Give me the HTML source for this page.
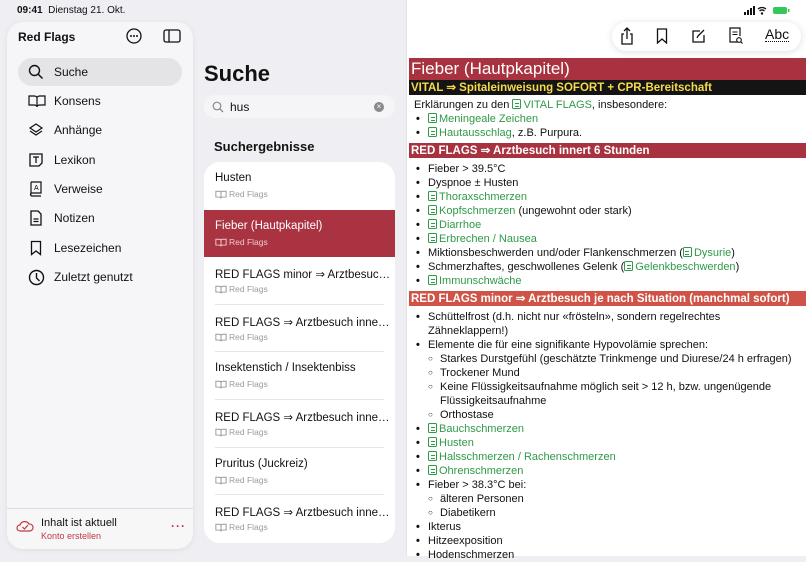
<!DOCTYPE html>
<html><head><meta charset="utf-8"><style>
*{margin:0;padding:0;box-sizing:border-box}
body{width:806px;height:556px;overflow:hidden;background:#efeff3;font-family:"Liberation Sans",sans-serif;color:#111;position:relative}
.a{position:absolute;white-space:nowrap}
.side{position:absolute;left:7px;top:22px;width:186px;height:527px;background:#f6f6f8;border-radius:16px;box-shadow:0 1px 6px rgba(0,0,0,.08);overflow:hidden}
.nav{position:absolute;left:0;width:186px;height:28px;font-size:12px;line-height:28px}
.nav svg{position:absolute;left:21px;top:6px}
.nav span{position:absolute;left:47px}
.list{position:absolute;left:204px;top:162px;width:191px;height:381px;background:#fff;border-radius:16px;overflow:hidden}
.row{position:absolute;left:0;width:191px;height:47.6px}
.row .t{position:absolute;left:11px;top:10px;font-size:11.5px;white-space:nowrap;width:176px;overflow:hidden;text-overflow:ellipsis}
.row .s{position:absolute;left:25px;top:27px;font-size:8.5px;color:#9a9a9e}
.row .b{position:absolute;left:11px;top:28px}
.row .ln{position:absolute;left:11px;right:11px;bottom:0;border-bottom:1px solid #e6e6e8}
.right{position:absolute;left:406px;top:0;width:400px;height:556px;background:#fff;border-left:1px solid #e2e2e2}
.c{position:absolute;left:2px;width:397px;font-size:11px;line-height:14px}
.bar{position:absolute;left:2px;width:397px;color:#fff;font-weight:bold;font-size:11.5px;padding-left:2px}
.g{color:#2f9a47}
.d{display:inline-block;width:9px;height:10px;border:1.2px solid #2f9a47;border-radius:1.5px;vertical-align:-1px;margin-right:2px;position:relative;background:linear-gradient(#2f9a47,#2f9a47) 1.5px 3px/4px 1px no-repeat,linear-gradient(#2f9a47,#2f9a47) 1.5px 5.5px/4px 1px no-repeat}
.bul{position:absolute;left:7px;font-size:11px}
</style></head><body>
<div class="a" style="left:17px;top:5px;font-size:10px;font-weight:bold">09:41&nbsp;&nbsp;<span style="font-weight:normal">Dienstag 21. Okt.</span></div>

<div class="side">
<div class="a" style="left:11px;top:8px;font-size:12px;font-weight:bold">Red Flags</div>
<svg class="a" style="left:119px;top:6px" width="16" height="16" viewBox="0 0 16 16"><circle cx="8" cy="8" r="7" fill="none" stroke="#111" stroke-width="1.3"/><circle cx="5" cy="8" r="1" fill="#111"/><circle cx="8" cy="8" r="1" fill="#111"/><circle cx="11" cy="8" r="1" fill="#111"/></svg>
<svg class="a" style="left:156px;top:7px" width="18" height="14" viewBox="0 0 18 14"><rect x="1" y="1" width="16" height="12" rx="2" fill="none" stroke="#111" stroke-width="1.3"/><line x1="6" y1="1" x2="6" y2="13" stroke="#111" stroke-width="1.3"/></svg>
<div class="nav" style="top:36px;left:11px;width:164px;background:#e4e4e7;border-radius:14px"><svg width="16" height="16" viewBox="0 0 16 16" style="left:10px"><circle cx="6.5" cy="6.5" r="5" fill="none" stroke="#111" stroke-width="1.4"/><line x1="10" y1="10" x2="14.5" y2="14.5" stroke="#111" stroke-width="1.5"/></svg><span style="left:36px">Suche</span></div>
<div class="nav" style="top:65px"><svg width="18" height="16" viewBox="0 0 18 16"><path d="M1 3h5c2 0 3 1 3 2v9c0-1-1-2-3-2H1zM17 3h-5c-2 0-3 1-3 2v9c0-1 1-2 3-2h5z" fill="none" stroke="#111" stroke-width="1.2"/></svg><span>Konsens</span></div>
<div class="nav" style="top:94px"><svg width="16" height="16" viewBox="0 0 16 16"><path d="M8 2l6 4-6 4-6-4z M2 9l6 4 6-4" fill="none" stroke="#111" stroke-width="1.2"/></svg><span>Anhänge</span></div>
<div class="nav" style="top:124px"><svg width="16" height="16" viewBox="0 0 16 16"><path d="M2 2h12v9l-3 3H2z" fill="none" stroke="#111" stroke-width="1.3"/><path d="M5 5h6M8 5v6" stroke="#111" stroke-width="1.3"/></svg><span>Lexikon</span></div>
<div class="nav" style="top:153px"><svg width="16" height="16" viewBox="0 0 16 16"><path d="M3 1h10v11H4a1.5 1.5 0 000 3h9M3 1v12.5" fill="none" stroke="#111" stroke-width="1.2"/><text x="6" y="9" font-size="7" font-family="Liberation Sans">A</text></svg><span>Verweise</span></div>
<div class="nav" style="top:182px"><svg width="16" height="16" viewBox="0 0 16 16"><path d="M3 1h7l3 3v11H3z" fill="none" stroke="#111" stroke-width="1.3"/><path d="M5.5 9h5M5.5 11.5h5" stroke="#111" stroke-width="1.2"/></svg><span>Notizen</span></div>
<div class="nav" style="top:212px"><svg width="16" height="16" viewBox="0 0 16 16"><path d="M3.5 1.5h9v13L8 11l-4.5 3.5z" fill="none" stroke="#111" stroke-width="1.3"/></svg><span>Lesezeichen</span></div>
<div class="nav" style="top:241px"><svg width="17" height="17" viewBox="0 0 17 17"><circle cx="8.5" cy="8.5" r="7" fill="none" stroke="#111" stroke-width="1.4"/><path d="M8.5 4v5l3 3" fill="none" stroke="#111" stroke-width="1.4"/></svg><span>Zuletzt genutzt</span></div>
<div class="a" style="left:0;top:486px;width:186px;border-top:1px solid #dedee0;height:41px;background:#f7f7f8"></div>
<svg class="a" style="left:9px;top:497px" width="18" height="14" viewBox="0 0 18 14"><path d="M4 12a3 3 0 010-6 5 5 0 019-1 3.5 3.5 0 011 7z" fill="none" stroke="#c03a48" stroke-width="1.2"/><path d="M6.5 8l2 2 3.5-4" fill="none" stroke="#c03a48" stroke-width="1.2"/></svg>
<div class="a" style="left:34px;top:495px;font-size:11px">Inhalt ist aktuell</div>
<div class="a" style="left:34px;top:509px;font-size:9px;color:#c03a48">Konto erstellen</div>
<div class="a" style="left:164px;top:497px;font-size:12px;color:#c03a48;letter-spacing:1px;font-weight:bold">···</div>
</div>

<div class="a" style="left:204px;top:61px;font-size:22px;font-weight:bold">Suche</div>
<div class="a" style="left:204px;top:95px;width:191px;height:23px;background:#f5f5f7;border-radius:11px"></div>
<svg class="a" style="left:212px;top:101px" width="12" height="12" viewBox="0 0 12 12"><circle cx="5" cy="5" r="3.8" fill="none" stroke="#888" stroke-width="1.2"/><line x1="7.8" y1="7.8" x2="11" y2="11" stroke="#888" stroke-width="1.3"/></svg>
<div class="a" style="left:230px;top:100px;font-size:12px">hus</div>
<div class="a" style="left:374px;top:102px;width:10px;height:10px;border-radius:5px;background:#8a8a8e;color:#fff;font-size:8px;line-height:10px;text-align:center">×</div>
<div class="a" style="left:214px;top:139px;font-size:13px;font-weight:bold">Suchergebnisse</div>

<div class="list">
<div class="row" style="top:0"><div class="t">Husten</div><svg class="b" width="12" height="9" viewBox="0 0 18 14"><path d="M1 2h5c2 0 3 1 3 2v9c0-1-1-2-3-2H1zM17 2h-5c-2 0-3 1-3 2v9c0-1 1-2 3-2h5z" fill="none" stroke="#9a9a9e" stroke-width="1.5"/></svg><div class="s">Red Flags</div></div>
<div class="row" style="top:47.6px;background:#a93340"><div class="t" style="color:#fff">Fieber (Hautpkapitel)</div><svg class="b" width="12" height="9" viewBox="0 0 18 14"><path d="M1 2h5c2 0 3 1 3 2v9c0-1-1-2-3-2H1zM17 2h-5c-2 0-3 1-3 2v9c0-1 1-2 3-2h5z" fill="none" stroke="#ecc" stroke-width="1.5"/></svg><div class="s" style="color:#ecc">Red Flags</div></div>
<div class="row" style="top:95.2px"><div class="t">RED FLAGS minor ⇒ Arztbesuch je nach Situation</div><svg class="b" width="12" height="9" viewBox="0 0 18 14"><path d="M1 2h5c2 0 3 1 3 2v9c0-1-1-2-3-2H1zM17 2h-5c-2 0-3 1-3 2v9c0-1 1-2 3-2h5z" fill="none" stroke="#9a9a9e" stroke-width="1.5"/></svg><div class="s">Red Flags</div><div class="ln"></div></div>
<div class="row" style="top:142.8px"><div class="t">RED FLAGS ⇒ Arztbesuch innert 6 Stunden</div><svg class="b" width="12" height="9" viewBox="0 0 18 14"><path d="M1 2h5c2 0 3 1 3 2v9c0-1-1-2-3-2H1zM17 2h-5c-2 0-3 1-3 2v9c0-1 1-2 3-2h5z" fill="none" stroke="#9a9a9e" stroke-width="1.5"/></svg><div class="s">Red Flags</div><div class="ln"></div></div>
<div class="row" style="top:190.4px"><div class="t">Insektenstich / Insektenbiss</div><svg class="b" width="12" height="9" viewBox="0 0 18 14"><path d="M1 2h5c2 0 3 1 3 2v9c0-1-1-2-3-2H1zM17 2h-5c-2 0-3 1-3 2v9c0-1 1-2 3-2h5z" fill="none" stroke="#9a9a9e" stroke-width="1.5"/></svg><div class="s">Red Flags</div><div class="ln"></div></div>
<div class="row" style="top:238px"><div class="t">RED FLAGS ⇒ Arztbesuch innert 6 Stunden</div><svg class="b" width="12" height="9" viewBox="0 0 18 14"><path d="M1 2h5c2 0 3 1 3 2v9c0-1-1-2-3-2H1zM17 2h-5c-2 0-3 1-3 2v9c0-1 1-2 3-2h5z" fill="none" stroke="#9a9a9e" stroke-width="1.5"/></svg><div class="s">Red Flags</div><div class="ln"></div></div>
<div class="row" style="top:285.6px"><div class="t">Pruritus (Juckreiz)</div><svg class="b" width="12" height="9" viewBox="0 0 18 14"><path d="M1 2h5c2 0 3 1 3 2v9c0-1-1-2-3-2H1zM17 2h-5c-2 0-3 1-3 2v9c0-1 1-2 3-2h5z" fill="none" stroke="#9a9a9e" stroke-width="1.5"/></svg><div class="s">Red Flags</div><div class="ln"></div></div>
<div class="row" style="top:333.2px"><div class="t">RED FLAGS ⇒ Arztbesuch innert 6 Stunden</div><svg class="b" width="12" height="9" viewBox="0 0 18 14"><path d="M1 2h5c2 0 3 1 3 2v9c0-1-1-2-3-2H1zM17 2h-5c-2 0-3 1-3 2v9c0-1 1-2 3-2h5z" fill="none" stroke="#9a9a9e" stroke-width="1.5"/></svg><div class="s">Red Flags</div></div>
</div>

<div class="right">
<svg class="a" style="left:337px;top:6px" width="50" height="9" viewBox="0 0 50 9"><rect x="0" y="6" width="2" height="3" fill="#111"/><rect x="3" y="4" width="2" height="5" fill="#111"/><rect x="6" y="2" width="2" height="7" fill="#111"/><rect x="9" y="0" width="2" height="9" fill="#111"/><path d="M14 3a6 6 0 018 0M15.5 5a3.5 3.5 0 015 0" fill="none" stroke="#111" stroke-width="1.3"/><circle cx="18" cy="7.5" r="1.2" fill="#111"/><rect x="29" y="1" width="14" height="7" rx="2" fill="#34c759"/><rect x="44" y="3" width="1.5" height="3" fill="#34c759"/></svg>
<div class="a" style="left:205px;top:22px;width:189px;height:29px;background:#fff;border-radius:15px;box-shadow:0 1px 8px rgba(0,0,0,.13)"></div>
<svg class="a" style="left:212px;top:27px" width="16" height="18" viewBox="0 0 16 18"><path d="M5 7H3v10h10V7h-2M8 12V1M5 4l3-3 3 3" fill="none" stroke="#111" stroke-width="1.3"/></svg>
<svg class="a" style="left:249px;top:28px" width="12" height="16" viewBox="0 0 12 16"><path d="M1.5 1h9v14L6 11l-4.5 4z" fill="none" stroke="#111" stroke-width="1.3"/></svg>
<svg class="a" style="left:284px;top:28px" width="16" height="16" viewBox="0 0 16 16"><path d="M9 3H2v11h11V7" fill="none" stroke="#111" stroke-width="1.3"/><path d="M6 10l1-2 6-6" fill="none" stroke="#111" stroke-width="1.3"/></svg>
<svg class="a" style="left:321px;top:27px" width="16" height="18" viewBox="0 0 16 18"><path d="M10 15H2V1h10v8" fill="none" stroke="#111" stroke-width="1.2"/><path d="M4.5 5h5M4.5 7.5h5" stroke="#111" stroke-width="1.1"/><circle cx="11" cy="13" r="2.3" fill="none" stroke="#111" stroke-width="1.1"/><line x1="12.6" y1="14.6" x2="14.5" y2="16.5" stroke="#111" stroke-width="1.2"/></svg>
<div class="a" style="left:358px;top:27px;font-size:14px;border-bottom:1.3px dotted #111;line-height:14px">Abc</div>

<div class="bar" style="top:58px;height:22px;background:#a8323f;font-size:17px;font-weight:normal;line-height:22px">Fieber (Hautpkapitel)</div>
<div class="bar" style="top:80px;height:15px;background:#141414;color:#f7d94c;line-height:16px">VITAL ⇒ Spitaleinweisung SOFORT + CPR-Bereitschaft</div>
<div class="c" style="top:98px">
<div style="padding-left:5px">Erklärungen zu den <span class="g"><i class="d"></i>VITAL FLAGS</span>, insbesondere:</div>
<div style="padding-left:19px;position:relative"><b class="bul">•</b><span class="g"><i class="d"></i>Meningeale Zeichen</span></div>
<div style="padding-left:19px;position:relative"><b class="bul">•</b><span class="g"><i class="d"></i>Hautausschlag</span>, z.B. Purpura.</div>
</div>
<div class="bar" style="top:143px;height:15px;background:#a8323f;line-height:16px">RED FLAGS ⇒ Arztbesuch innert 6 Stunden</div>
<div class="c" style="top:162px">
<div style="padding-left:19px;position:relative"><b class="bul">•</b>Fieber &gt; 39.5°C</div>
<div style="padding-left:19px;position:relative"><b class="bul">•</b>Dyspnoe ± Husten</div>
<div style="padding-left:19px;position:relative"><b class="bul">•</b><span class="g"><i class="d"></i>Thoraxschmerzen</span></div>
<div style="padding-left:19px;position:relative"><b class="bul">•</b><span class="g"><i class="d"></i>Kopfschmerzen</span> (ungewohnt oder stark)</div>
<div style="padding-left:19px;position:relative"><b class="bul">•</b><span class="g"><i class="d"></i>Diarrhoe</span></div>
<div style="padding-left:19px;position:relative"><b class="bul">•</b><span class="g"><i class="d"></i>Erbrechen / Nausea</span></div>
<div style="padding-left:19px;position:relative"><b class="bul">•</b>Miktionsbeschwerden und/oder Flankenschmerzen (<span class="g"><i class="d"></i>Dysurie</span>)</div>
<div style="padding-left:19px;position:relative"><b class="bul">•</b>Schmerzhaftes, geschwollenes Gelenk (<span class="g"><i class="d"></i>Gelenkbeschwerden</span>)</div>
<div style="padding-left:19px;position:relative"><b class="bul">•</b><span class="g"><i class="d"></i>Immunschwäche</span></div>
</div>
<div class="bar" style="top:291px;height:15px;background:#cf5346;line-height:16px">RED FLAGS minor ⇒ Arztbesuch je nach Situation (manchmal sofort)</div>
<div class="c" style="top:310px">
<div style="padding-left:19px;position:relative"><b class="bul">•</b>Schüttelfrost (d.h. nicht nur «frösteln», sondern regelrechtes<br>Zähneklappern!)</div>
<div style="padding-left:19px;position:relative"><b class="bul">•</b>Elemente die für eine signifikante Hypovolämie sprechen:</div>
<div style="padding-left:31px;position:relative"><span class="bul" style="left:19px;font-size:8px">○</span>Starkes Durstgefühl (geschätzte Trinkmenge und Diurese/24 h erfragen)</div>
<div style="padding-left:31px;position:relative"><span class="bul" style="left:19px;font-size:8px">○</span>Trockener Mund</div>
<div style="padding-left:31px;position:relative"><span class="bul" style="left:19px;font-size:8px">○</span>Keine Flüssigkeitsaufnahme möglich seit &gt; 12 h, bzw. ungenügende<br>Flüssigkeitsaufnahme</div>
<div style="padding-left:31px;position:relative"><span class="bul" style="left:19px;font-size:8px">○</span>Orthostase</div>
<div style="padding-left:19px;position:relative"><b class="bul">•</b><span class="g"><i class="d"></i>Bauchschmerzen</span></div>
<div style="padding-left:19px;position:relative"><b class="bul">•</b><span class="g"><i class="d"></i>Husten</span></div>
<div style="padding-left:19px;position:relative"><b class="bul">•</b><span class="g"><i class="d"></i>Halsschmerzen / Rachenschmerzen</span></div>
<div style="padding-left:19px;position:relative"><b class="bul">•</b><span class="g"><i class="d"></i>Ohrenschmerzen</span></div>
<div style="padding-left:19px;position:relative"><b class="bul">•</b>Fieber &gt; 38.3°C bei:</div>
<div style="padding-left:31px;position:relative"><span class="bul" style="left:19px;font-size:8px">○</span>älteren Personen</div>
<div style="padding-left:31px;position:relative"><span class="bul" style="left:19px;font-size:8px">○</span>Diabetikern</div>
<div style="padding-left:19px;position:relative"><b class="bul">•</b>Ikterus</div>
<div style="padding-left:19px;position:relative"><b class="bul">•</b>Hitzeexposition</div>
<div style="padding-left:19px;position:relative"><b class="bul">•</b>Hodenschmerzen</div>
</div>
</div>
</body></html>
